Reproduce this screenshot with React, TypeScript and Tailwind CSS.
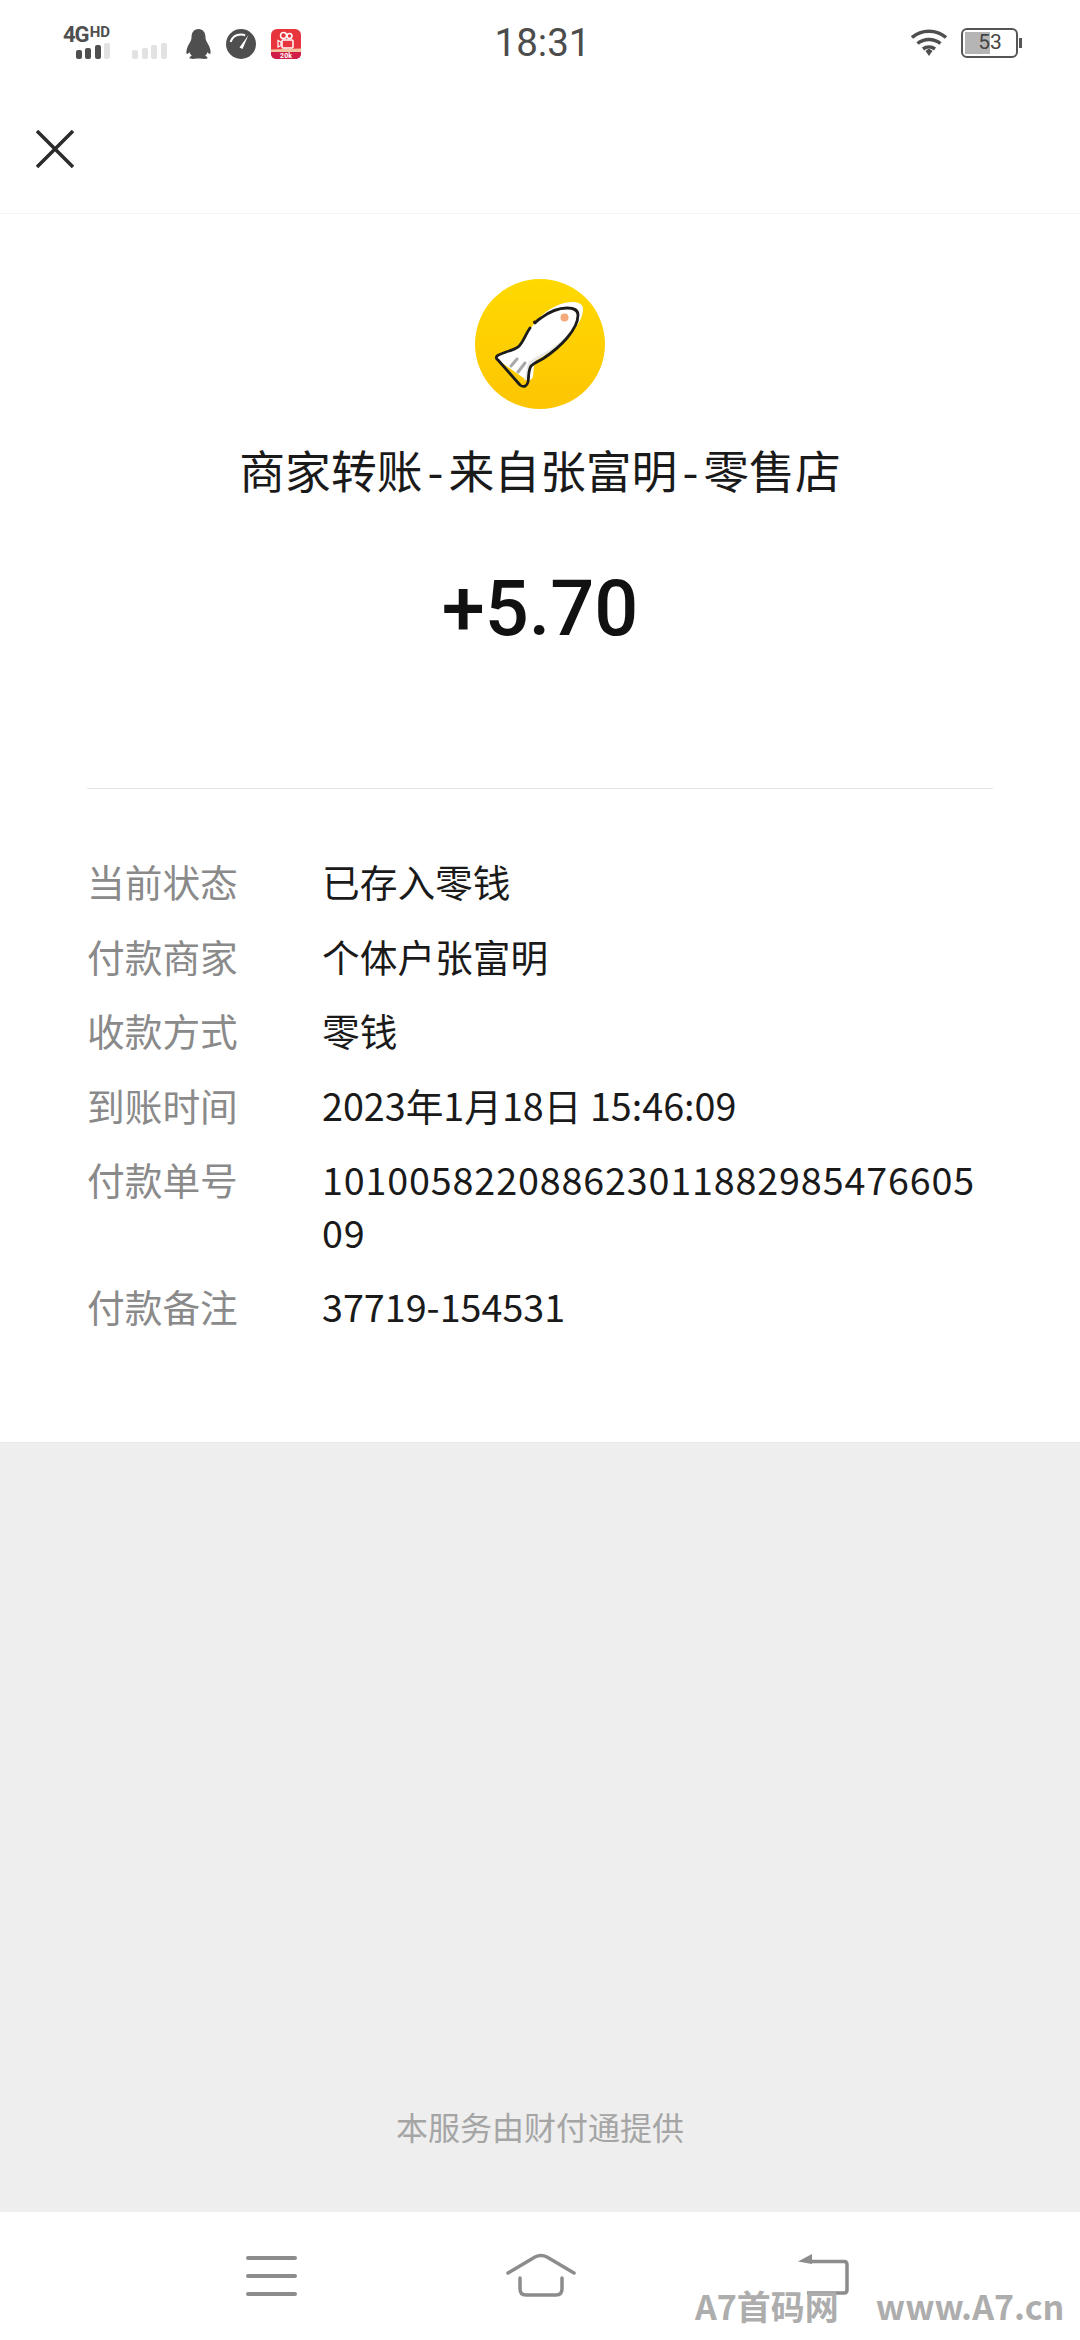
const font = { fontFamily: '"Noto Sans CJK SC", Roboto, sans-serif' };
const roboto = { fontFamily: "Roboto, sans-serif" };

const rows = [
  { label: "当前状态", value: "已存入零钱", tracking: "" },
  { label: "付款商家", value: "个体户张富明", tracking: "" },
  { label: "收款方式", value: "零钱", tracking: "" },
  { label: "到账时间", value: "2023年1月18日 15:46:09", tracking: "" },
  { label: "付款单号", value: "10100582208862301188298547660509", tracking: "tracking-[0.85px]" },
  { label: "付款备注", value: "37719-154531", tracking: "" },
];

function Signal({ active }: { active: number }) {
  return (
    <div className="flex items-end gap-[3.5px]">
      {[9, 11, 14, 16].map((h, i) => (
        <div
          key={i}
          className={`w-[6px] rounded-[2px] ${i < active ? "bg-[#4f4f4f]" : "bg-[#e2e2e2]"}`}
          style={{ height: h }}
        />
      ))}
    </div>
  );
}

function Penguin() {
  return (
    <svg width="25" height="30" viewBox="0 0 25 30" fill="#4f4f4f">
      <path d="M12.500 0C8 0 5.500 3.500 5.500 8.500c0 2-.8 3.500-2.500 6.500-2 3.500-3 7-2.500 9.500.3 1 1.700.3 3-1.200.6 1.400 1.300 2.600 2.300 3.500C4.500 27.500 3.500 28 3.500 29c0 1 3.500 1 5.500.8 1.300-.3 5.700-.3 7 0 2 .2 5.500.2 5.500-.8 0-1-1-1.500-2.300-2.200 1-.9 1.700-2.100 2.300-3.500 1.300 1.500 2.700 2.200 3 1.200.5-2.500-.5-6-2.500-9.500-1.700-3-2.500-4.500-2.500-6.500C19.500 3.500 17 0 12.500 0z" />
    </svg>
  );
}

function Gauge() {
  return (
    <svg width="30" height="30" viewBox="0 0 30 30">
      <circle cx="15" cy="15" r="15" fill="#4f4f4f" />
      <path d="M4.500 13C6 8.500 10 5.500 15 5.500c1.500 0 3 .3 4.200.8" fill="none" stroke="#fff" strokeWidth="2" />
      <path d="M13.500 18.500 22.500 6l-6 14z" fill="#fff" />
    </svg>
  );
}

function AppBadge() {
  return (
    <svg width="30" height="30" viewBox="0 0 30 30">
      <rect width="30" height="30" rx="6" fill="#e8353d" />
      <circle cx="12.500" cy="6.500" r="3" fill="none" stroke="#fff" strokeWidth="1.500" />
      <circle cx="18.500" cy="7" r="2.500" fill="none" stroke="#fff" strokeWidth="1.500" />
      <rect x="11" y="11" width="11" height="8" rx="1" fill="none" stroke="#fff" strokeWidth="1.500" />
      <path d="M10 13 7 11.500v6.500l3-1.500z" fill="none" stroke="#fff" strokeWidth="1.200" />
      <path d="M0 20.500l30-1v4H0z" fill="#f4c6a0" />
      <path d="M0 23h30v2a5 5 0 0 1-5 5H5a5 5 0 0 1-5-5z" fill="#cf1f48" />
      <text x="15" y="28.500" textAnchor="middle" fontSize="7" fontWeight="700" fill="#fff" style={roboto}>
        20k
      </text>
    </svg>
  );
}

function Wifi() {
  return (
    <svg width="36" height="27" viewBox="0 0 36 27" fill="none" stroke="#4f4f4f" strokeWidth="3.500">
      <path d="M1 8.500C10.500 0 25.500 0 35 8.500" />
      <path d="M6.500 14.500c6.500-5.500 16.500-5.500 23 0" />
      <path d="M12 20c3.500-2.600 8.500-2.600 12 0" />
      <path d="M14.500 22 18 19.500l3.500 2.500-3.500 5z" fill="#4f4f4f" stroke="none" />
    </svg>
  );
}

function Battery() {
  return (
    <div className="flex items-center gap-[1px]">
      <div className="relative flex h-[30px] w-[57px] items-center overflow-hidden rounded-[6px] border-[2.500px] border-[#555] bg-white p-[2px]">
        <div className="h-full w-[25px] bg-[#b5b5b5]" />
        <span className="absolute inset-0 flex items-center justify-center text-[21px] leading-none text-[#444]" style={roboto}>
          53
        </span>
      </div>
      <div className="h-[10px] w-[2.500px] bg-[#555]" />
    </div>
  );
}

function FishLogo() {
  return (
    <div className="h-[130px] w-[130px] rounded-full bg-gradient-to-b from-[#ffd900] to-[#fdc503]">
      <svg width="130" height="130" viewBox="0 0 130 130" fill="none">
        <path
          d="M22 77c6-4 15-5 21-9 4-4 6-10 10-15 5-7 11-15 18-20 8-6 18-10 26-10 7 0 11 2 11 7 0 8-5 16-11 23-6 7-14 14-23 20-5 3-10 5-13 8-3 5-2 11-3 16-1 4-4 6-8 3L23 81c-2-1-2-3-1-4z"
          fill="#fff"
        />
        <path d="M104 40c-3 7-9 14-18 22-8 7-17 12-25 16-5 3-8 5-9 10-1 5-1 9-3 14 4-2 5-6 5-11 0-4 2-7 6-9 8-4 19-11 27-19 8-7 15-15 17-23z" fill="#e8e8e8" />
        <path
          d="M55 49c-5 7-7 15-12 19-6 4-15 5-21 9-1 1-1 3 1 4l22 25c4 3 7 1 8-3 1-5 0-11 3-16 3-3 8-5 13-8 9-6 17-13 23-20 6-7 11-15 11-23 0-5-4-7-11-7-8 0-18 4-26 10-2 1-4 3-6 5"
          stroke="#1c1c1c"
          strokeWidth="2.800"
          strokeLinecap="round"
          strokeLinejoin="round"
        />
        <circle cx="59.500" cy="43" r="1.500" fill="#1c1c1c" />
        <circle cx="89.500" cy="38.500" r="4" fill="#f5a878" />
        <path d="M42 80l-6 7M50 84l-7 9" stroke="#a8a8a8" strokeWidth="3" strokeLinecap="round" />
      </svg>
    </div>
  );
}

export default function App() {
  return (
    <div className="flex h-[2340px] w-[1080px] flex-col overflow-hidden bg-white" style={font}>
      <div className="grid h-[85px] grid-cols-3 items-center pl-[63px] pr-[58px]">
        <div className="flex items-end">
          <div className="flex w-[47px] flex-col">
            <div className="flex h-[16px] font-bold leading-none text-[#4f4f4f]" style={roboto}>
              <span className="text-[22px] leading-[16px] tracking-[-1px]">4G</span>
              <span className="ml-[1px] text-[15px] leading-[10px]">HD</span>
            </div>
            <div className="flex justify-end">
              <Signal active={3} />
            </div>
          </div>
          <div className="ml-[22px]">
            <Signal active={0} />
          </div>
          <div className="ml-[19px] flex items-center gap-[15px]">
            <Penguin />
            <Gauge />
            <AppBadge />
          </div>
        </div>
        <span className="text-center text-[38.500px] text-[#4c4c4c]" style={roboto}>
          18:31
        </span>
        <div className="flex items-center justify-end gap-[14px]">
          <Wifi />
          <Battery />
        </div>
      </div>

      <div className="flex h-[129px] items-center border-b border-[#f3f3f3] pl-[36px]">
        <svg width="38" height="38" viewBox="0 0 38 38" stroke="#2b2b2b" strokeWidth="3.500">
          <path d="M1 1l36 36M37 1 1 37" />
        </svg>
      </div>

      <div className="flex h-[1229px] flex-col items-center border-b border-[#e8e8e8] pt-[65px]">
        <FishLogo />
        <h1 className="mt-[30px] text-[45.800px] font-normal leading-[60px] text-[#1a1a1a]">
          商家转账<span className="mx-[5px]">-</span>来自张富明<span className="mx-[5px]">-</span>零售店
        </h1>
        <p className="mt-[66px] text-[77.500px] font-medium leading-[88px] text-[#111]" style={roboto}>
          +5.70
        </p>

        <div className="mt-[135px] w-[906px] border-t border-[#e5e5e5] pt-[66px]">
          <div className="flex flex-col gap-[22px]">
            {rows.map((row) => (
              <div key={row.label} className="flex text-[37.700px] leading-[52.500px]">
                <span className="w-[235px] shrink-0 text-[#8a8a8a]">{row.label}</span>
                <span className={`max-w-[660px] break-all text-[#1a1a1a] ${row.tracking}`}>{row.value}</span>
              </div>
            ))}
          </div>
        </div>
      </div>

      <div className="flex h-[769px] items-end justify-center bg-[#eeeeee] pb-[62px]">
        <span className="text-[32px] leading-[48px] text-[#a5a5a5]">本服务由财付通提供</span>
      </div>

      <div className="relative flex flex-1 items-start pl-[246px] pt-[41px]">
        <svg width="51" height="40" viewBox="0 0 51 40" fill="none" stroke="#8c8c8c" strokeWidth="4" strokeLinecap="round" className="mt-[3px]">
          <path d="M2 2h47M2 20h47M2 38h47" />
        </svg>
        <svg width="70" height="46" viewBox="0 0 70 46" fill="none" stroke="#8c8c8c" strokeWidth="3.500" strokeLinecap="round" className="ml-[209px]">
          <path d="M2 20 29 4c4-2 8-2 12 0l27 16" />
          <path d="M14 25v11c0 4 2 6 6 6h30c4 0 6-2 6-6V25" />
        </svg>
        <svg width="51" height="42" viewBox="0 0 51 42" fill="none" stroke="#8c8c8c" className="ml-[222px]">
          <path d="M12 8.500h34c2 0 3 1 3 3V37c0 2-1 3-3 3H9" strokeWidth="3.500" />
          <path d="M0 8.500 14 1v10z" fill="#8c8c8c" stroke="none" />
        </svg>
        <div className="absolute left-[695px] top-[77px] flex items-center gap-[37px] text-[34px] font-bold leading-none text-[#adadad]">
          <span>A7首码网</span>
          <span>www.A7.cn</span>
        </div>
      </div>
    </div>
  );
}
